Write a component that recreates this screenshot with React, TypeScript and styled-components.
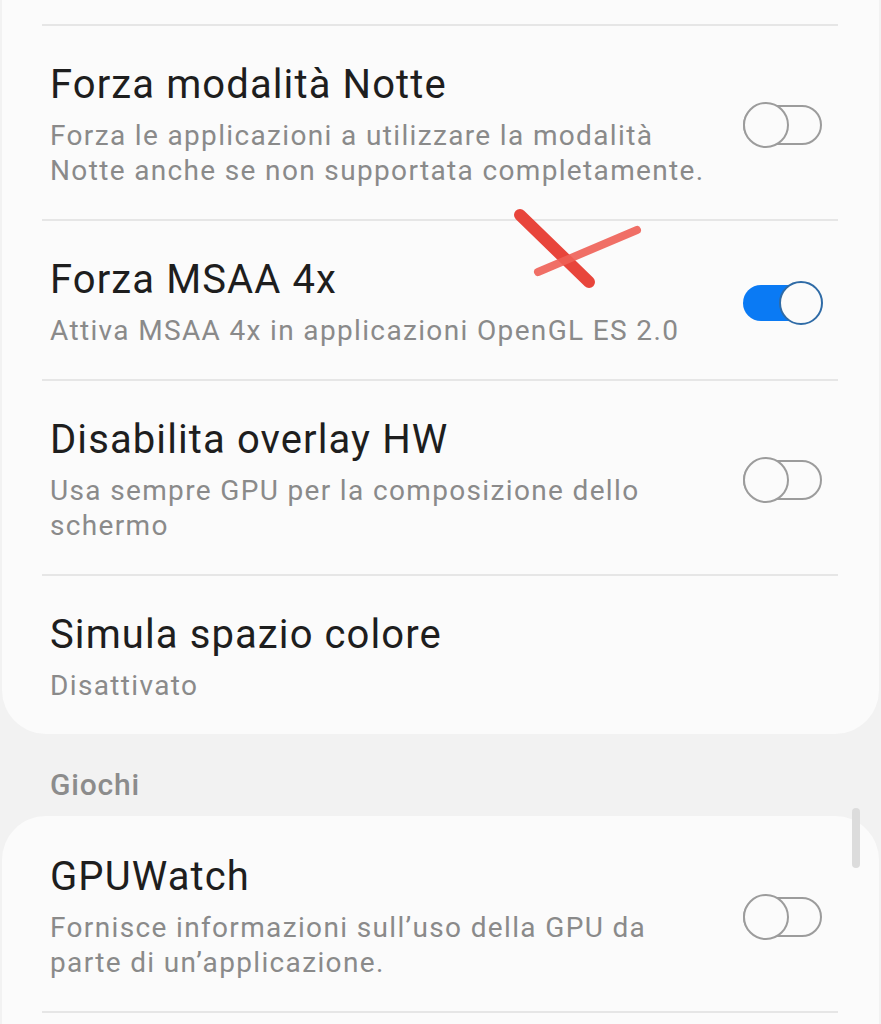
import React from 'react';
import styled, { createGlobalStyle } from 'styled-components';

const GlobalStyle = createGlobalStyle`
    html, body {
        margin: 0;
        padding: 0;
        background: #f2f2f2;
        font-family: Roboto, 'Noto Sans', sans-serif;
        overflow: hidden;
    }
`;

const Page = styled.div`
    position: relative;
    width: 881px;
    height: 1024px;
    overflow: hidden;
    background: #f2f2f2;
`;

const Card = styled.div<{ $cutTop?: boolean }>`
    margin: 0 2px;
    background: #fbfbfb;
    border-radius: ${(p) => (p.$cutTop ? '0 0 44px 44px' : '44px 44px 0 0')};
    padding-top: ${(p) => (p.$cutTop ? '24px' : '2px')};
    padding-bottom: ${(p) => (p.$cutTop ? '0' : '40px')};
`;

const Divider = styled.div`
    height: 2px;
    margin: 0 41px 0 40px;
    background: #e6e6e6;
`;

const Row = styled.div`
    display: flex;
    align-items: center;
    gap: 33px;
    padding: 36px 57px 31px 48px;
`;

const Text = styled.div`
    flex: 1;
    min-width: 0;
`;

const Title = styled.div`
    font-size: 40px;
    line-height: 46px;
    letter-spacing: 1.1px;
    color: #1e1e1e;
`;

const Sub = styled.div`
    margin-top: 10px;
    font-size: 28px;
    line-height: 35px;
    letter-spacing: 1.35px;
    color: #8a8a8a;
`;

const Track = styled.div<{ $on?: boolean }>`
    position: relative;
    width: 79px;
    height: ${(p) => (p.$on ? '36px' : '40px')};
    flex-shrink: 0;
    box-sizing: border-box;
    border-radius: 22px;
    background: ${(p) => (p.$on ? '#0a7af4' : 'transparent')};
    border: ${(p) => (p.$on ? 'none' : '2.5px solid #9c9c9c')};
`;

const Knob = styled.div<{ $on?: boolean }>`
    position: absolute;
    top: 50%;
    ${(p) => (p.$on ? 'right: -1px;' : 'left: -2.5px;')}
    width: ${(p) => (p.$on ? '44px' : '46px')};
    height: ${(p) => (p.$on ? '44px' : '46px')};
    box-sizing: border-box;
    transform: translateY(-50%);
    border-radius: 50%;
    background: #fbfbfb;
    border: 2.5px solid ${(p) => (p.$on ? '#2f6ba6' : '#9c9c9c')};
`;

const SectionHeader = styled.div`
    padding: 33px 50px 13px;
    font-size: 30px;
    line-height: 36px;
    letter-spacing: 0.8px;
    font-weight: 500;
    color: #8c8c8c;
`;

const Scrollbar = styled.div`
    position: absolute;
    left: 852px;
    top: 808px;
    width: 8px;
    height: 60px;
    border-radius: 4px;
    background: #dcdcdc;
`;

const Scribble = styled.svg`
    position: absolute;
    left: 505px;
    top: 200px;
    pointer-events: none;
`;

function Toggle({ on }: { on?: boolean }) {
    return (
        <Track $on={on}>
            <Knob $on={on} />
        </Track>
    );
}

type Item = { title: string; sub?: string; toggle?: 'on' | 'off' };

function SettingRow({ item }: { item: Item }) {
    return (
        <Row>
            <Text>
                <Title>{item.title}</Title>
                {item.sub && <Sub>{item.sub}</Sub>}
            </Text>
            {item.toggle && <Toggle on={item.toggle === 'on'} />}
        </Row>
    );
}

const graphics: Item[] = [
    {
        title: 'Forza modalità Notte',
        sub: 'Forza le applicazioni a utilizzare la modalità Notte anche se non supportata completamente.',
        toggle: 'off',
    },
    {
        title: 'Forza MSAA 4x',
        sub: 'Attiva MSAA 4x in applicazioni OpenGL ES 2.0',
        toggle: 'on',
    },
    {
        title: 'Disabilita overlay HW',
        sub: 'Usa sempre GPU per la composizione dello schermo',
        toggle: 'off',
    },
    { title: 'Simula spazio colore', sub: 'Disattivato' },
];

const games: Item[] = [
    {
        title: 'GPUWatch',
        sub: 'Fornisce informazioni sull\u2019uso della GPU da parte di un\u2019applicazione.',
        toggle: 'off',
    },
];

export default function App() {
    return (
        <Page>
            <GlobalStyle />
            <Card $cutTop>
                {graphics.map((item) => (
                    <React.Fragment key={item.title}>
                        <Divider />
                        <SettingRow item={item} />
                    </React.Fragment>
                ))}
            </Card>
            <SectionHeader>Giochi</SectionHeader>
            <Card>
                {games.map((item) => (
                    <SettingRow key={item.title} item={item} />
                ))}
                <Divider />
            </Card>
            <Scrollbar />
            <Scribble width="150" height="100" viewBox="0 0 150 100">
                <path d="M15 15 L84 82" stroke="#e8453b" strokeWidth="12" strokeLinecap="round" fill="none" />
                <path d="M33 72 L132 30" stroke="#ee5f55" strokeWidth="8" strokeLinecap="round" fill="none" opacity="0.9" />
            </Scribble>
        </Page>
    );
}
